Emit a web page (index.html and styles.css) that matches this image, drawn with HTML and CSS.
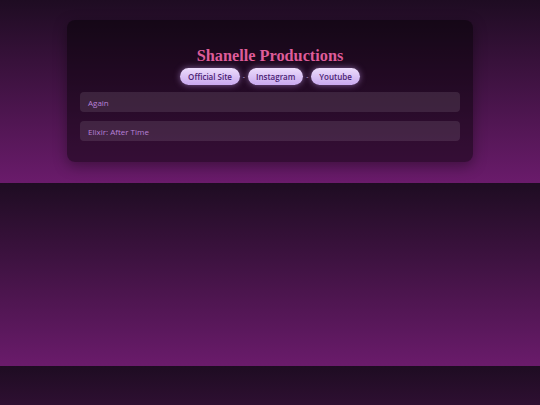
FILE: index.html
```html
<!DOCTYPE html>
<html>
<head>
<meta charset="utf-8">
<link rel="stylesheet" href="styles.css">
</head>
<body>
<div class="page">
  <div class="card">
    <h1 class="title">Shanelle Productions</h1>
    <div class="links">
      <a class="pill">Official Site</a>
      <span class="sep">-</span>
      <a class="pill">Instagram</a>
      <span class="sep">-</span>
      <a class="pill">Youtube</a>
    </div>
    <div class="list">
      <div class="item">Again</div>
      <div class="item">Elixir: After Time</div>
    </div>
  </div>
</div>
</body>
</html>
```
FILE: styles.css
```css
html {
  background: linear-gradient(#1e0c22, #6a1b6b);
  background-size: 100% 183px;
  background-repeat: repeat;
  min-height: 100%;
}
body {
  margin: 0;
  font-family: "Open Sans", sans-serif;
}
.page {
  padding: 20px 67px 21px;
}
.card {
  width: 406px;
  box-sizing: border-box;
  height: 142px;
  background: rgba(0, 0, 0, 0.45);
  border-radius: 8px;
  box-shadow: 0 4px 14px rgba(0, 0, 0, 0.35);
  padding: 27px 13px 0;
  display: flex;
  flex-direction: column;
}
.title {
  margin: 0;
  text-align: center;
  font-family: "Liberation Serif", serif;
  font-weight: bold;
  font-size: 16.3px;
  line-height: 18px;
  color: #de5c99;
}
.links {
  display: flex;
  justify-content: center;
  align-items: center;
  gap: 2px;
  margin-top: 3px;
}
.pill {
  display: inline-flex;
  align-items: center;
  justify-content: center;
  height: 17px;
  padding: 0 8px;
  border-radius: 9px;
  background: linear-gradient(#ecdcfb, #c9a9ef);
  color: #4b2273;
  font-family: "Open Sans", sans-serif;
  font-weight: 600;
  font-size: 8px;
  box-shadow: 0 0 6px rgba(200, 160, 240, 0.55);
}
.sep {
  color: #c9b0e0;
  font-size: 7px;
  width: 4px;
  text-align: center;
}
.list {
  display: flex;
  flex-direction: column;
  gap: 9px;
  margin-top: 7px;
}
.item {
  height: 20px;
  border-radius: 4px;
  background: rgba(255, 255, 255, 0.1);
  color: #b880d8;
  font-family: "Open Sans", sans-serif;
  font-size: 8px;
  display: flex;
  align-items: center;
  padding-left: 8px;
}
```
